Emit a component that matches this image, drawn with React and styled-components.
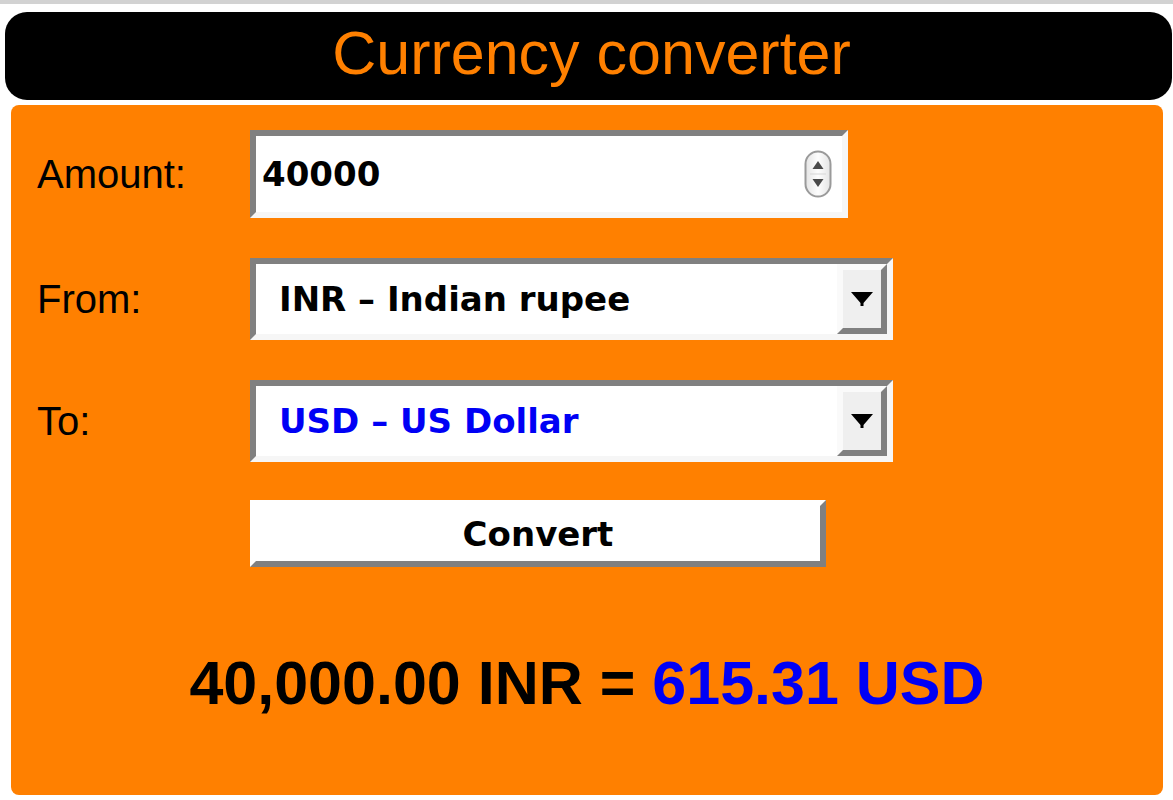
import React, { useState } from 'react';
import styled, { createGlobalStyle } from 'styled-components';

const ORANGE = '#ff8000';
const BLUE = '#0000f5';
const BEVEL = '#808080';

const GlobalStyle = createGlobalStyle`
	html, body {
		margin: 0;
		padding: 0;
		background: #fff;
	}
	body {
		font-family: 'Liberation Sans', Arial, sans-serif;
	}
`;

const Page = styled.div`
	width: 1173px;
	min-height: 800px;
	background: #fff;
	border-top: 4px solid #d2d2d2;
	box-sizing: border-box;
`;

const Header = styled.h1`
	margin: 8px 1px 0 5px;
	height: 88px;
	background: #000;
	border-radius: 22px;
	color: ${ORANGE};
	font-family: 'Liberation Sans', Arial, sans-serif;
	font-weight: normal;
	font-size: 61px;
	line-height: 82px;
	text-align: center;
	text-indent: 6px;
`;

const Panel = styled.form`
	margin: 5px 10px 0 11px;
	padding: 25px 0 76px 26px;
	background: ${ORANGE};
	border-radius: 8px;
`;

const Grid = styled.div`
	display: grid;
	grid-template-columns: 213px auto;
	row-gap: 40px;
	align-items: center;
	justify-items: start;
`;

const Label = styled.label`
	font-family: 'Liberation Sans', Arial, sans-serif;
	font-size: 40px;
	color: #000;
`;

const Inset = styled.div`
	display: flex;
	align-items: center;
	box-sizing: border-box;
	width: ${p => p.$width}px;
	height: ${p => p.$height}px;
	background: #fff;
	border: 6px solid;
	border-color: ${BEVEL} #f6f6f6 #f6f6f6 ${BEVEL};
`;

const TextInput = styled.input`
	flex: 1;
	min-width: 0;
	height: 100%;
	border: 0;
	outline: none;
	padding: 0 0 0 6px;
	background: transparent;
	font-family: 'DejaVu Sans', Verdana, sans-serif;
	font-weight: bold;
	font-size: 34px;
	color: #000;
`;

const Spinner = styled.div`
	display: flex;
	margin-right: 10px;
`;

const Select = styled.select`
	flex: 1;
	min-width: 0;
	height: 100%;
	border: 0;
	outline: none;
	appearance: none;
	-webkit-appearance: none;
	padding: 0 0 0 23px;
	background: transparent;
	font-family: 'DejaVu Sans', Verdana, sans-serif;
	font-weight: bold;
	font-size: 34px;
	color: ${p => p.$color};
`;

const DropButton = styled.div`
	display: flex;
	align-items: center;
	justify-content: center;
	box-sizing: border-box;
	width: 50px;
	height: 100%;
	background: #efefef;
	border: 6px solid;
	border-color: #fafafa ${BEVEL} ${BEVEL} #fafafa;
	pointer-events: none;
`;

const ConvertButton = styled.button`
	box-sizing: border-box;
	width: 576px;
	height: 67px;
	margin-top: -2px;
	background: #fff;
	border: 6px solid;
	border-color: #fff ${BEVEL} ${BEVEL} #fff;
	font-family: 'DejaVu Sans', Verdana, sans-serif;
	font-weight: bold;
	font-size: 34px;
	color: #000;
	padding: 0;
	cursor: pointer;
`;

const Result = styled.p`
	margin: 80px 0 0 -26px;
	text-align: center;
	font-family: 'Liberation Sans', Arial, sans-serif;
	font-weight: bold;
	font-size: 61px;
	line-height: 72px;
	color: #000;
`;

const Converted = styled.span`
	color: ${BLUE};
`;

const currencies = [
	{ code: 'INR', name: 'Indian rupee' },
	{ code: 'USD', name: 'US Dollar' },
	{ code: 'EUR', name: 'Euro' },
	{ code: 'GBP', name: 'British pound' }
];

const SpinIcon = () => (
	<svg width='28' height='48' viewBox='0 0 28 48'>
		<defs>
			<linearGradient id='spinfill' x1='0' y1='0' x2='1' y2='0'>
				<stop offset='0' stopColor='#e4e4e4' />
				<stop offset='0.5' stopColor='#fdfdfd' />
				<stop offset='1' stopColor='#e4e4e4' />
			</linearGradient>
		</defs>
		<rect x='1.5' y='1.5' width='25' height='45' rx='12.5' fill='url(#spinfill)' stroke='#9a9a9a' strokeWidth='2' />
		<line x1='6' y1='24' x2='22' y2='24' stroke='#d6d6d6' strokeWidth='1' />
		<path d='M14 11 L19.5 19 H8.5 Z' fill='#4a4a4a' />
		<path d='M14 37 L19.5 29 H8.5 Z' fill='#4a4a4a' />
	</svg>
);

const ArrowIcon = () => (
	<svg width='24' height='18' viewBox='0 0 24 18'>
		<path d='M1 2 H23 L13.5 13 V16 H10.5 V13 Z' fill='#000' />
	</svg>
);

function CurrencySelect({ value, onChange, color }) {
	return (
		<Inset $width={643} $height={82}>
			<Select value={value} onChange={e => onChange(e.target.value)} $color={color}>
				{currencies.map(c => (
					<option key={c.code} value={c.code}>
						{c.code} – {c.name}
					</option>
				))}
			</Select>
			<DropButton>
				<ArrowIcon />
			</DropButton>
		</Inset>
	);
}

export default function App() {
	const [amount, setAmount] = useState('40000');
	const [from, setFrom] = useState('INR');
	const [to, setTo] = useState('USD');

	return (
		<Page>
			<GlobalStyle />
			<Header>Currency converter</Header>
			<Panel onSubmit={e => e.preventDefault()}>
				<Grid>
					<Label htmlFor='amount'>Amount:</Label>
					<Inset $width={598} $height={88}>
						<TextInput id='amount' value={amount} onChange={e => setAmount(e.target.value)} />
						<Spinner>
							<SpinIcon />
						</Spinner>
					</Inset>

					<Label>From:</Label>
					<CurrencySelect value={from} onChange={setFrom} color='#000' />

					<Label>To:</Label>
					<CurrencySelect value={to} onChange={setTo} color={BLUE} />

					<span />
					<ConvertButton type='submit'>Convert</ConvertButton>
				</Grid>
				<Result>
					40,000.00 INR = <Converted>615.31 USD</Converted>
				</Result>
			</Panel>
		</Page>
	);
}
